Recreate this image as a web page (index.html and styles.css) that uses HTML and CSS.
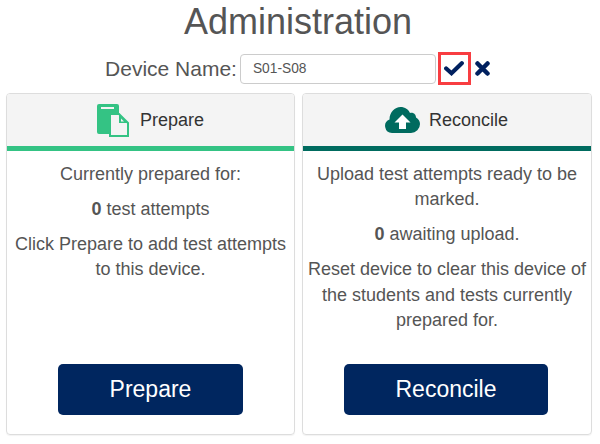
FILE: index.html
```html
<!DOCTYPE html>
<html lang="en">
<head>
    <meta charset="UTF-8">
    <meta name="viewport" content="width=device-width, initial-scale=1.0">
    <title>Administration</title>
    <link rel="stylesheet" href="styles.css">
</head>
<body>
    <h1 class="titulo">Administration</h1>
    <div class="device">
        <label class="device-label" for="device-name">Device Name:</label>
        <input class="device-input" id="device-name" type="text" value="S01-S08">
        <button class="icon-btn guardar" aria-label="Save">
            <svg width="20" height="15" viewBox="0 0 20 15"><path d="M2.200 7.500l5.300 4.700L17.800 2.300" fill="none" stroke="#00205f" stroke-width="4.200" stroke-linecap="round"/></svg>
        </button>
        <button class="icon-btn cancelar" aria-label="Cancel">
            <svg width="15" height="15" viewBox="0 0 15 15"><path d="M2.500 2.500l10 10M12.500 2.500l-10 10" fill="none" stroke="#00205f" stroke-width="4.500" stroke-linecap="round"/></svg>
        </button>
    </div>
    <div class="paneles">
        <div class="panel">
            <div class="panel-head prepare">
                <svg class="panel-icon" width="34" height="33" viewBox="0 0 34 33">
                    <path d="M2 0h18a2 2 0 0 1 2 2v8h-9v20H2a2 2 0 0 1-2-2V2a2 2 0 0 1 2-2z" fill="#34c384"/>
                    <rect x="4" y="3" width="13" height="2" fill="#f4f4f4"/>
                    <path d="M13 10h9l9 9v13H13z" fill="#f4f4f4" stroke="#34c384" stroke-width="2"/>
                    <path d="M22 10l9 9h-9z" fill="#34c384"/>
                    <path d="M24 14.500l3 3h-3z" fill="#f4f4f4"/>
                </svg>
                <span>Prepare</span>
            </div>
            <div class="panel-body">
                <p>Currently prepared for:</p>
                <p><b>0</b> test attempts</p>
                <p>Click Prepare to add test attempts to this device.</p>
            </div>
            <div class="panel-foot"><button class="accion btn-prepare">Prepare</button></div>
        </div>
        <div class="panel panel-ancho">
            <div class="panel-head reconcile">
                <svg class="panel-icon" width="35" height="26" viewBox="0 0 35 26">
                    <path d="M7 26a7 7 0 0 1-2.500-13.500C4.500 5 10 0 15.500 0c4.500 0 8 2.500 9.500 6 3.500-1 6 1.500 6 4.500 2.500 1.500 4 3.500 4 6.500a9 9 0 0 1-9 9z" fill="#006b5f"/>
                    <path d="M17.500 7.500l8 8h-4.500v6.500h-7v-6.500h-4.500z" fill="#fff"/>
                </svg>
                <span>Reconcile</span>
            </div>
            <div class="panel-body">
                <p>Upload test attempts ready to be marked.</p>
                <p><b>0</b> awaiting upload.</p>
                <p>Reset device to clear this device of the students and tests currently prepared for.</p>
            </div>
            <div class="panel-foot"><button class="accion btn-reconcile">Reconcile</button></div>
        </div>
    </div>
</body>
</html>
```

FILE: styles.css
```css
body {
    margin: 0;
    height: 444px;
    overflow: hidden;
    background: white;
    color: #555;
    font-family: "Liberation Sans", Arial, sans-serif;
    font-size: 18px;
}
.titulo {
    margin: 0;
    padding: 1px 4px 0 0;
    height: 51px;
    line-height: 42px;
    text-align: center;
    font-size: 36px;
    font-weight: 400;
}
.device {
    display: flex;
    align-items: center;
    justify-content: center;
    height: 33px;
    padding-right: 5px;
    margin-bottom: 8px;
}
.device-label {
    font-size: 21px;
    margin-right: 3px;
}
.device-input {
    box-sizing: border-box;
    width: 196px;
    height: 30px;
    padding: 0 12px;
    border: 1px solid #ccc;
    border-radius: 4px;
    color: #555;
    font-family: inherit;
    font-size: 13.750px;
}
.icon-btn {
    display: flex;
    align-items: center;
    justify-content: center;
    padding: 0;
    background: none;
}
.guardar {
    box-sizing: border-box;
    width: 33px;
    height: 33px;
    margin-left: 2px;
    border: 3px solid #f83d41;
}
.cancelar {
    width: 15px;
    height: 33px;
    margin-left: 4px;
    border: none;
}
.paneles {
    display: flex;
    gap: 7px;
    padding: 0 0 0 6px;
}
.panel {
    box-sizing: border-box;
    width: 289px;
    height: 342px;
    display: flex;
    flex-direction: column;
    border: 1px solid #ddd;
    border-radius: 4px;
    box-shadow: 0 1px 1px rgba(0, 0, 0, 0.05);
}
.panel-ancho {
    width: 290px;
}
.panel-head {
    height: 52px;
    display: flex;
    align-items: center;
    justify-content: center;
    gap: 9px;
    background: #f4f4f4;
    color: #333;
    border-radius: 3px 3px 0 0;
}
.panel-head.prepare {
    border-bottom: 5px solid #34c384;
}
.panel-head.reconcile {
    border-bottom: 5px solid #006b5f;
    padding-right: 1px;
}
.panel-body {
    flex: 1;
    padding: 10.700px 3px 0;
    text-align: center;
    line-height: 25.200px;
}
.panel-body p {
    margin: 0 0 10px;
}
.panel-foot {
    display: flex;
    justify-content: center;
    padding-bottom: 19px;
}
.accion {
    height: 51px;
    border: none;
    border-radius: 5px;
    background: #00265f;
    color: white;
    font-family: inherit;
    font-size: 23px;
}
.btn-prepare {
    width: 185px;
}
.btn-reconcile {
    width: 204px;
    margin-right: 2px;
}
```
